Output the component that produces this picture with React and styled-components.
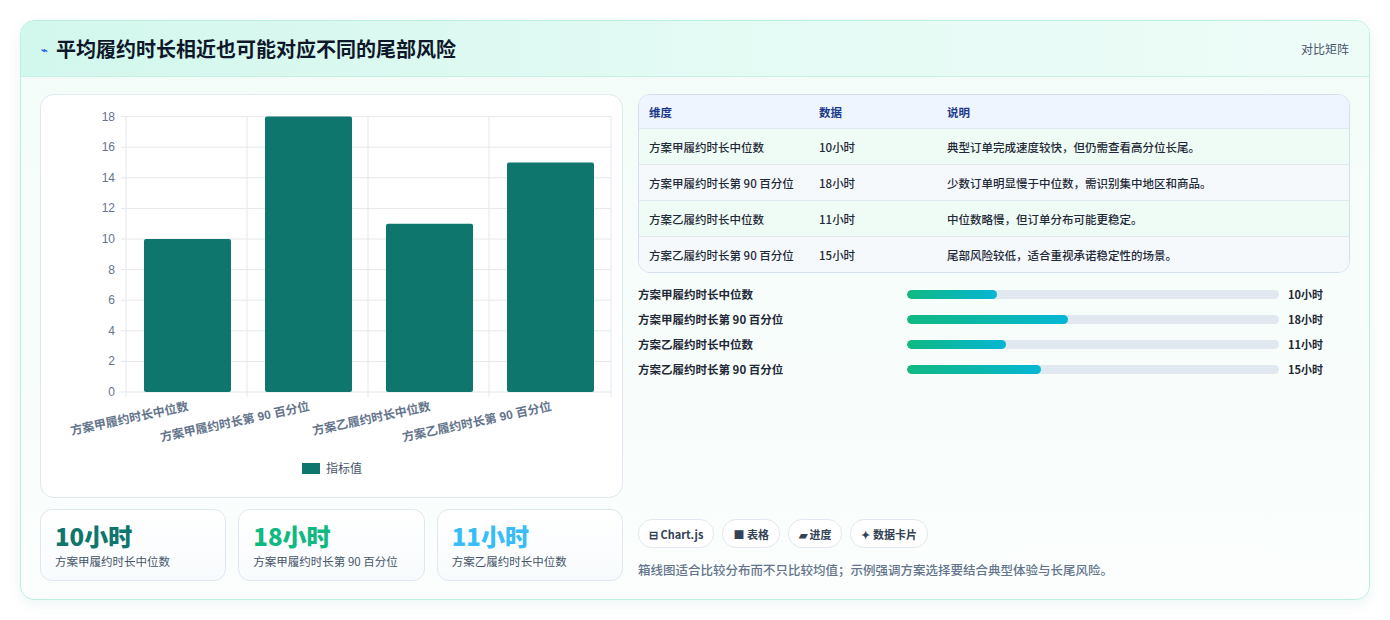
import React from "react";
import styled, { createGlobalStyle } from "styled-components";

const Global = createGlobalStyle`
  body { margin:0; background:#fff; font-family:"Noto Sans CJK SC","Noto Sans",sans-serif; }
`;
const Page = styled.div`padding:20px 20px 20px 20px; width:1390px; box-sizing:border-box;`;
const Card = styled.div`
  border:1px solid #bdeee2; border-radius:14px; overflow:hidden;
  background:linear-gradient(180deg,#f3fcf8 0%,#fbfefd 100%);
  box-shadow:0 4px 14px rgba(15,118,110,0.08);
`;
const Header = styled.div`
  height:55px; display:flex; align-items:center; justify-content:space-between;
  padding:0 20px; background:linear-gradient(90deg,#d2f7ec,#e6fbf5 60%,#eefcf8);
  border-bottom:1px solid #c9efe4;
`;
const Title = styled.div`display:flex; align-items:center; gap:8px; font-size:20px; font-weight:700; color:#0f172a;`;
const Tag = styled.div`font-size:12px; color:#475569;`;
const Body = styled.div`display:grid; grid-template-columns:583px 1fr; gap:15px; padding:17px 19px 18px 19px;`;
const Left = styled.div`display:flex; flex-direction:column; gap:11px;`;
const ChartBox = styled.div`height:402px; background:#fff; border:1px solid #dfe7ef; border-radius:14px;`;
const Stats = styled.div`display:grid; grid-template-columns:repeat(3,1fr); gap:12px;`;
const Stat = styled.div`height:72px; box-sizing:border-box; border:1px solid #dfe7ef; border-radius:12px; background:linear-gradient(180deg,#fff,#f8fbfd); padding:10px 14px;`;
const StatVal = styled.div`font-size:24px; font-weight:800; color:${p=>p.c}; line-height:32px;`;
const StatLbl = styled.div`font-size:11.5px; color:#475569; margin-top:1px;`;
const Right = styled.div`display:flex; flex-direction:column; justify-content:space-between;`;
const Table = styled.div`border:1px solid #d3dfec; border-radius:12px; overflow:hidden; background:#fff;`;
const Row = styled.div`
  display:grid; grid-template-columns:170px 128px 1fr; align-items:center; padding:0 10px;
  height:${p=>p.h?33:35}px; font-size:11.5px;
  background:${p=>p.h?"#eef5fe":p.alt?"#f5f9fc":"#effbf5"};
  color:${p=>p.h?"#1e3a8a":"#1f2937"}; font-weight:${p=>p.h?600:500};
  border-top:${p=>p.h?"none":"1px solid #e2e8f0"};
`;
const Bars = styled.div`display:flex; flex-direction:column; gap:7px; margin-top:12px;`;
const BarRow = styled.div`display:grid; grid-template-columns:269px 372px 1fr; gap:0; align-items:center; height:18px; font-size:11.5px; font-weight:600; color:#1f2937;`;
const Track = styled.div`height:9px; background:#e2e8f0; border-radius:5px; overflow:hidden;`;
const Fill = styled.div`height:100%; border-radius:5px; background:linear-gradient(90deg,#10b981,#06b6d4);`;
const BarVal = styled.div`padding-left:9px; font-size:11px;`;
const Bottom = styled.div`display:flex; flex-direction:column; gap:12px; margin-bottom:2px;`;
const Chips = styled.div`display:flex; gap:8px;`;
const Chip = styled.div`height:27px; padding:0 10px; border:1px solid #e2e8f0; border-radius:14px; background:#fff; display:flex; align-items:center; gap:4px; font-size:11px; font-weight:600; color:#334155;`;
const Note = styled.div`font-size:12.5px; color:#64748b; font-weight:500;`;

const data=[["方案甲履约时长中位数",10,"典型订单完成速度较快，但仍需查看高分位长尾。"],["方案甲履约时长第 90 百分位",18,"少数订单明显慢于中位数，需识别集中地区和商品。"],["方案乙履约时长中位数",11,"中位数略慢，但订单分布可能更稳定。"],["方案乙履约时长第 90 百分位",15,"尾部风险较低，适合重视承诺稳定性的场景。"]];

function Chart(){
  const y0=297, k=15.3; const xs=[146,267,388,509];
  return (
    <svg width="583" height="402" viewBox="0 0 583 402" style={{display:"block"}}>
      {[0,2,4,6,8,10,12,14,16,18].map(v=>(
        <g key={v}>
          <line x1="80" x2="570" y1={y0-v*k} y2={y0-v*k} stroke="#e5e7eb"/>
          <text x="74" y={y0-v*k+4} textAnchor="end" fontSize="12" fill="#64748b" fontFamily="Liberation Sans">{v}</text>
        </g>))}
      {[85,206,327,448,570].map(x=><line key={x} x1={x} x2={x} y1={y0-18*k} y2={y0+5} stroke="#e5e7eb"/>)}
      {data.map((d,i)=><rect key={i} x={xs[i]-43} y={y0-d[1]*k} width="87" height={d[1]*k} rx="2" fill="#0f766e"/>)}
      {data.map((d,i)=><text key={i} transform={`translate(${xs[i]+2},${y0+18}) rotate(-12)`} textAnchor="end" fontSize="12" fontWeight="600" fill="#64748b" fontFamily="Liberation Sans,Noto Sans CJK SC">{d[0]}</text>)}
      <rect x="261" y="368" width="18" height="11" fill="#0f766e"/>
      <text x="285" y="378" fontSize="12" fill="#475569" fontFamily="Noto Sans CJK SC">指标值</text>
    </svg>);
}

export default function App(){
  return (<><Global/><Page><Card>
    <Header>
      <Title><span style={{fontSize:11,color:"#2563eb"}}>⌁</span>平均履约时长相近也可能对应不同的尾部风险</Title>
      <Tag>对比矩阵</Tag>
    </Header>
    <Body>
      <Left>
        <ChartBox><Chart/></ChartBox>
        <Stats>
          <Stat><StatVal c="#0f766e">10小时</StatVal><StatLbl>方案甲履约时长中位数</StatLbl></Stat>
          <Stat><StatVal c="#10b981">18小时</StatVal><StatLbl>方案甲履约时长第 90 百分位</StatLbl></Stat>
          <Stat><StatVal c="#38bdf8">11小时</StatVal><StatLbl>方案乙履约时长中位数</StatLbl></Stat>
        </Stats>
      </Left>
      <Right>
        <div>
          <Table>
            <Row h><span>维度</span><span>数据</span><span>说明</span></Row>
            {data.map((d,i)=><Row key={i} alt={i%2===1}><span>{d[0]}</span><span>{d[1]}小时</span><span>{d[2]}</span></Row>)}
          </Table>
          <Bars>
            {data.map((d,i)=><BarRow key={i}><span>{d[0]}</span><Track><Fill style={{width:`${d[1]/41.5*100}%`}}/></Track><BarVal>{d[1]}小时</BarVal></BarRow>)}
          </Bars>
        </div>
        <Bottom>
          <Chips>
            <Chip>⊟ Chart.js</Chip><Chip>■ 表格</Chip><Chip>▰ 进度</Chip><Chip>✦ 数据卡片</Chip>
          </Chips>
          <Note>箱线图适合比较分布而不只比较均值；示例强调方案选择要结合典型体验与长尾风险。</Note>
        </Bottom>
      </Right>
    </Body>
  </Card></Page></>);
}
